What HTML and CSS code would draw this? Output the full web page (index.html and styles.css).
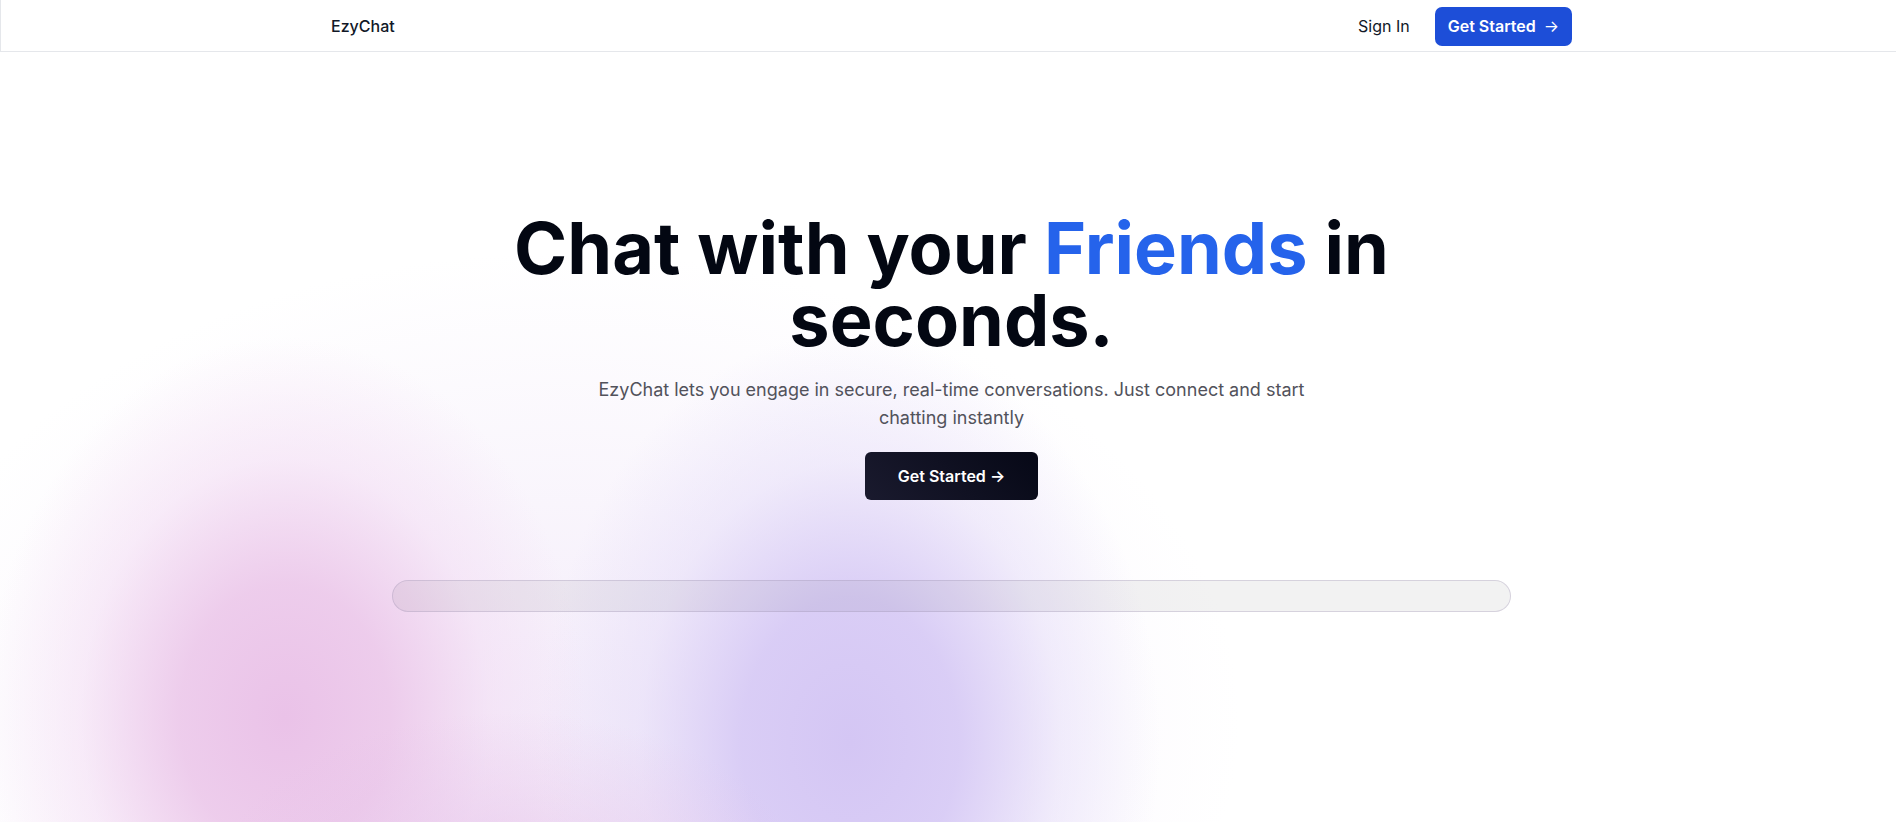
FILE: index.html
```html
<!DOCTYPE html>
<html lang="en">
<head>
<meta charset="utf-8">
<title>EzyChat</title>
<link rel="stylesheet" href="styles.css">
</head>
<body>
<header class="nav">
  <div class="nav-inner">
    <a class="brand" href="#">EzyChat</a>
    <div class="nav-actions">
      <a class="signin" href="#">Sign In</a>
      <a class="btn-primary" href="#">Get Started <span class="arrow">→</span></a>
    </div>
  </div>
</header>
<main class="hero">
  <h1 class="headline">Chat with your <span class="accent">Friends</span> in seconds.</h1>
  <p class="lead">EzyChat lets you engage in secure, real-time conversations. Just connect and start chatting instantly</p>
  <a class="btn-dark" href="#">Get Started →</a>
  <div class="preview-bar"></div>
</main>
</body>
</html>
```
FILE: styles.css
```css
* { box-sizing: border-box; }
html, body { margin: 0; padding: 0; }
body {
  font-family: Inter, "Noto Sans", sans-serif;
  color: #030712;
  background: #fff;
  overflow: hidden;
}
a { text-decoration: none; color: inherit; }

.nav {
  height: 52px;
  border-left: 1px solid #e5e7eb;
  border-bottom: 1px solid #e5e7eb;
}
.nav-inner {
  height: 51px;
  width: 1241px;
  margin-left: 330px;
  display: flex;
  align-items: center;
  justify-content: space-between;
}
.brand {
  font-size: 16px;
  font-weight: 500;
  color: #111827;
}
.nav-actions {
  display: flex;
  align-items: center;
  gap: 25px;
}
.signin {
  font-size: 16px;
  font-weight: 400;
  color: #111827;
}
.btn-primary {
  display: flex;
  align-items: center;
  height: 39px;
  padding: 0 13px;
  border-radius: 7px;
  background: #1d4ed8;
  color: #fff;
  font-size: 16px;
  font-weight: 600;
  margin-top: 1px;
}
.btn-primary .arrow {
  margin-left: 8px;
  font-weight: 400;
}

.hero {
  height: 770px;
  display: flex;
  flex-direction: column;
  align-items: center;
  padding-top: 160px;
  padding-left: 7px;
  background:
    radial-gradient(ellipse 300px 180px at 510px 840px, rgba(228, 190, 232, 0.7), rgba(255,255,255,0) 100%),
    radial-gradient(ellipse 300px 380px at 285px 665px, rgba(234, 194, 232, 1) 0%, rgba(236, 200, 234, 0.9) 35%, rgba(242, 216, 242, 0.45) 68%, rgba(255,255,255,0) 100%),
    radial-gradient(ellipse 310px 410px at 850px 690px, rgba(212, 198, 244, 1) 0%, rgba(214, 201, 245, 0.9) 35%, rgba(226, 217, 248, 0.45) 68%, rgba(255,255,255,0) 100%),
    radial-gradient(ellipse 680px 470px at 560px 670px, rgba(240, 230, 248, 0.75), rgba(255,255,255,0) 100%);
}
.headline {
  margin: 0;
  font-size: 72px;
  line-height: 72px;
  font-weight: 700;
  text-align: center;
  max-width: 900px;
  color: #030712;
}
.accent { color: #2563eb; }
.lead {
  margin: 20px 0 0;
  max-width: 740px;
  font-size: 18px;
  line-height: 28px;
  text-align: center;
  color: #52525b;
}
.btn-dark {
  margin-top: 20px;
  display: flex;
  align-items: center;
  justify-content: center;
  width: 173px;
  height: 48px;
  border-radius: 6px;
  background: linear-gradient(45deg, #1a1a2e, #060816);
  color: #fff;
  font-size: 16px;
  font-weight: 600;
}
.preview-bar {
  margin-top: 80px;
  width: 1119px;
  height: 32px;
  border-radius: 16px;
  border: 1px solid rgba(160, 150, 180, 0.35);
  background: rgba(0, 0, 0, 0.05);
}
```
